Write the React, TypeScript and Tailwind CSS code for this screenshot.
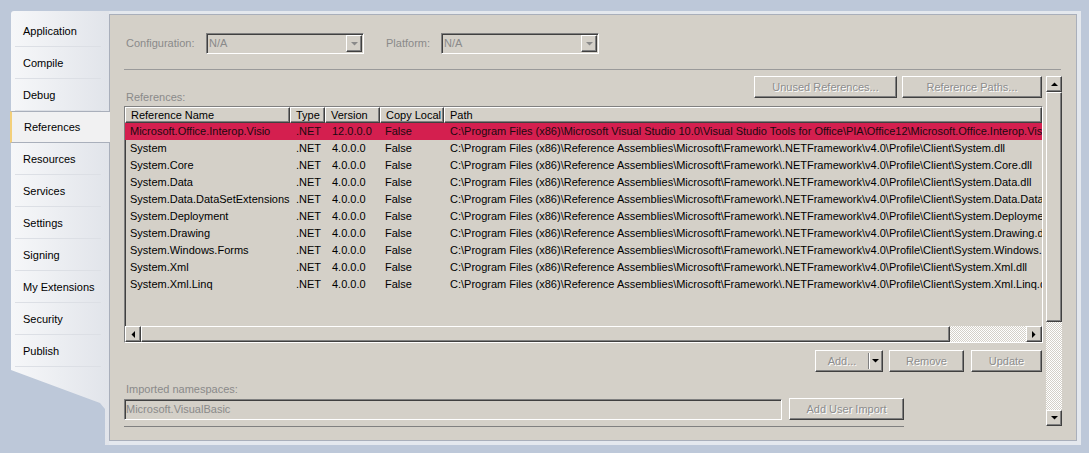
import React from "react";

const raised =
  "border border-t-white border-l-white border-r-[#404040] border-b-[#404040] shadow-[inset_-1px_-1px_0_#808080]";
const sunken =
  "border border-t-[#808080] border-l-[#808080] border-r-white border-b-white shadow-[inset_1px_1px_0_#404040]";
const checker =
  "[background-image:repeating-conic-gradient(#ffffff_0_25%,#d4d0c8_0_50%)] [background-size:2px_2px]";
const sideBg = "bg-linear-to-r from-[#f6f7f9] to-[#e1e4ea]";

const tabs = [
  "Application",
  "Compile",
  "Debug",
  "References",
  "Resources",
  "Services",
  "Settings",
  "Signing",
  "My Extensions",
  "Security",
  "Publish",
];

const fw = "C:\\Program Files (x86)\\Reference Assemblies\\Microsoft\\Framework\\.NETFramework\\v4.0\\Profile\\Client\\";

const refs = [
  {
    name: "Microsoft.Office.Interop.Visio",
    version: "12.0.0.0",
    path: "C:\\Program Files (x86)\\Microsoft Visual Studio 10.0\\Visual Studio Tools for Office\\PIA\\Office12\\Microsoft.Office.Interop.Visio.dll",
  },
  { name: "System", version: "4.0.0.0", path: fw + "System.dll" },
  { name: "System.Core", version: "4.0.0.0", path: fw + "System.Core.dll" },
  { name: "System.Data", version: "4.0.0.0", path: fw + "System.Data.dll" },
  { name: "System.Data.DataSetExtensions", version: "4.0.0.0", path: fw + "System.Data.DataSetExtensions.dll" },
  { name: "System.Deployment", version: "4.0.0.0", path: fw + "System.Deployment.dll" },
  { name: "System.Drawing", version: "4.0.0.0", path: fw + "System.Drawing.dll" },
  { name: "System.Windows.Forms", version: "4.0.0.0", path: fw + "System.Windows.Forms.dll" },
  { name: "System.Xml", version: "4.0.0.0", path: fw + "System.Xml.dll" },
  { name: "System.Xml.Linq", version: "4.0.0.0", path: fw + "System.Xml.Linq.dll" },
];

// little classic scrollbar / combo arrows
function Arrow({ dir, color = "#000" }: { dir: "up" | "down" | "left" | "right"; color?: string }) {
  const pts = {
    up: "0,4 3.5,0.5 7,4",
    down: "0,0 7,0 3.5,3.5",
    left: "4,0 4,7 0.5,3.5",
    right: "0,0 0,7 3.5,3.5",
  }[dir];
  const vertical = dir === "up" || dir === "down";
  return (
    <svg width={vertical ? 7 : 4} height={vertical ? 4 : 7} viewBox={vertical ? "0 0 7 4" : "0 0 4 7"}>
      <polygon points={pts} fill={color} />
    </svg>
  );
}

function Btn({ className, children }: { className: string; children: React.ReactNode }) {
  return (
    <div
      className={`flex h-[22px] items-center justify-center bg-[#d4d0c8] text-[#8d8d8d] [text-shadow:1px_1px_0_#ffffff] ${raised} ${className}`}
    >
      {children}
    </div>
  );
}

function Combo() {
  return (
    <div className={`flex h-[21px] w-[158px] items-center bg-[#d4d0c8] ${sunken}`}>
      <span className="flex-1 pl-[2px] text-[#8a8a8a]">N/A</span>
      <div className={`mr-[1px] flex h-[17px] w-[16px] items-center justify-center ${raised}`}>
        <Arrow dir="down" color="#8a8a8a" />
      </div>
    </div>
  );
}

function Sidebar() {
  return (
    <div className="relative z-10 flex w-[98px] flex-col">
      <div className={`h-[4px] rounded-tl-[3px] ${sideBg}`} />
      {tabs.map((t) =>
        t === "References" ? (
          <div
            key={t}
            className="mr-[-1px] -ml-[1px] flex h-[32px] items-center border-y border-l-2 border-y-[#a9afbb] border-l-[#f3cf7a] bg-[#f1f1f2] pt-px pl-[12px] text-black"
          >
            {t}
          </div>
        ) : (
          <div key={t} className={`flex h-[32px] flex-col ${sideBg}`}>
            <div className="flex flex-1 items-center pt-px pl-[12px] text-black">{t}</div>
            <div className="mr-[8px] ml-[4px] h-px bg-[#dcdfe5]" />
          </div>
        )
      )}
      <div
        className={`h-[78px] ${sideBg} [clip-path:polygon(0_0,98px_0,98px_78px,94px_78px,94px_42px,89px_36px,0_3px)]`}
      />
    </div>
  );
}

function RefTable() {
  const cols = ["w-[165px]", "w-[35px]", "w-[55px]", "w-[64px]"];
  return (
    <div className={`flex h-[237px] w-[919px] flex-col bg-[#d4d0c8] ${sunken}`}>
      <div className="flex h-[16px] text-black">
        {["Reference Name", "Type", "Version", "Copy Local"].map((h, i) => (
          <div key={h} className={`flex shrink-0 items-center pl-[5px] leading-none ${raised} ${cols[i]}`}>
            {h}
          </div>
        ))}
        <div className={`flex flex-1 items-center pl-[5px] leading-none ${raised}`}>Path</div>
      </div>
      {refs.map((r, i) => (
        <div
          key={r.name}
          className={`flex h-[17px] items-center whitespace-nowrap ${i === 0 ? "bg-[#d41f4f] text-[#1a0a0f]" : "text-black"}`}
        >
          <div className="w-[165px] shrink-0 overflow-hidden pl-[5px]">{r.name}</div>
          <div className="w-[35px] shrink-0 pl-[6px]">.NET</div>
          <div className="w-[55px] shrink-0 pl-[7px]">{r.version}</div>
          <div className="w-[64px] shrink-0 pl-[5px]">False</div>
          <div className="flex-1 overflow-hidden pl-[6px]">{r.path}</div>
        </div>
      ))}
      <div className="flex-1" />
      <div className="flex h-[16px]">
        <div className={`flex w-[16px] items-center justify-center bg-[#d4d0c8] ${raised}`}>
          <Arrow dir="left" />
        </div>
        <div className={`w-[809px] bg-[#d4d0c8] ${raised}`} />
        <div className={`flex-1 ${checker}`} />
        <div className={`flex w-[16px] items-center justify-center bg-[#d4d0c8] ${raised}`}>
          <Arrow dir="right" />
        </div>
      </div>
    </div>
  );
}

export default function App() {
  return (
    <div className="h-[453px] w-[1089px] overflow-hidden bg-[#bdc8d9] pt-[11px] pl-[11px] font-['Liberation_Sans',Arial,sans-serif] text-[11px]">
      <div className="flex">
        <Sidebar />
        <div className="h-[434px] w-[972px] bg-[#e4e8ee] pt-[3px] pr-[4px] pb-[4px]">
          <div className="h-full border border-[#a9afbb] bg-[#d4d0c8] pr-[13px] pl-[14px]">
            {/* configuration row */}
            <div className="mt-[18px] flex h-[21px] items-center">
              <span className="w-[82px] pl-[2px] text-[#8a8a8a]">Configuration:</span>
              <Combo />
              <span className="ml-[22px] w-[55px] text-[#8a8a8a]">Platform:</span>
              <Combo />
            </div>
            <div className="mt-[15px] h-px w-[937px] bg-[#9a9a9a]" />

            <div className="mt-[6px] flex gap-[2px]">
              <div className="flex h-[352px] w-[920px] flex-col overflow-hidden">
                <div className="flex h-[30px]">
                  <span className="mb-[2px] self-end pl-[2px] leading-[13px] text-[#8a8a8a]">References:</span>
                  <div className="ml-auto flex gap-[5px] pr-[2px]">
                    <Btn className="w-[143px]">Unused References...</Btn>
                    <Btn className="w-[140px]">Reference Paths...</Btn>
                  </div>
                </div>
                <RefTable />
                <div className="mt-[7px] flex justify-end gap-[6px] pr-[2px]">
                  <div
                    className={`flex h-[22px] w-[68px] items-center bg-[#d4d0c8] text-[#8d8d8d] [text-shadow:1px_1px_0_#ffffff] ${raised}`}
                  >
                    <span className="flex-1 text-center">Add...</span>
                    <div className="h-[16px] w-px bg-[#808080] shadow-[1px_0_0_#ffffff]" />
                    <div className="flex w-[13px] items-center justify-center">
                      <Arrow dir="down" />
                    </div>
                  </div>
                  <Btn className="w-[75px]">Remove</Btn>
                  <Btn className="ml-[1px] w-[71px]">Update</Btn>
                </div>
                <div className="mt-[11px] pl-[2px] leading-[13px] text-[#8a8a8a]">Imported namespaces:</div>
                <div className="mt-[2px] flex h-[22px] items-center gap-[7px]">
                  <div className={`flex h-[21px] w-[658px] items-center bg-[#d4d0c8] pl-[1px] text-[#8a8a8a] ${sunken}`}>
                    Microsoft.VisualBasic
                  </div>
                  <Btn className="w-[115px]">Add User Import</Btn>
                </div>
                <div className="mt-[6px] h-px w-[780px] bg-[#808080]" />
              </div>

              {/* page scrollbar */}
              <div className="flex h-[350px] w-[16px] flex-col">
                <div className={`flex h-[16px] items-center justify-center bg-[#d4d0c8] ${raised}`}>
                  <Arrow dir="up" />
                </div>
                <div className={`h-[230px] bg-[#d4d0c8] ${raised}`} />
                <div className={`flex-1 ${checker}`} />
                <div className={`flex h-[16px] items-center justify-center bg-[#d4d0c8] ${raised}`}>
                  <Arrow dir="down" />
                </div>
              </div>
            </div>
          </div>
        </div>
      </div>
    </div>
  );
}
